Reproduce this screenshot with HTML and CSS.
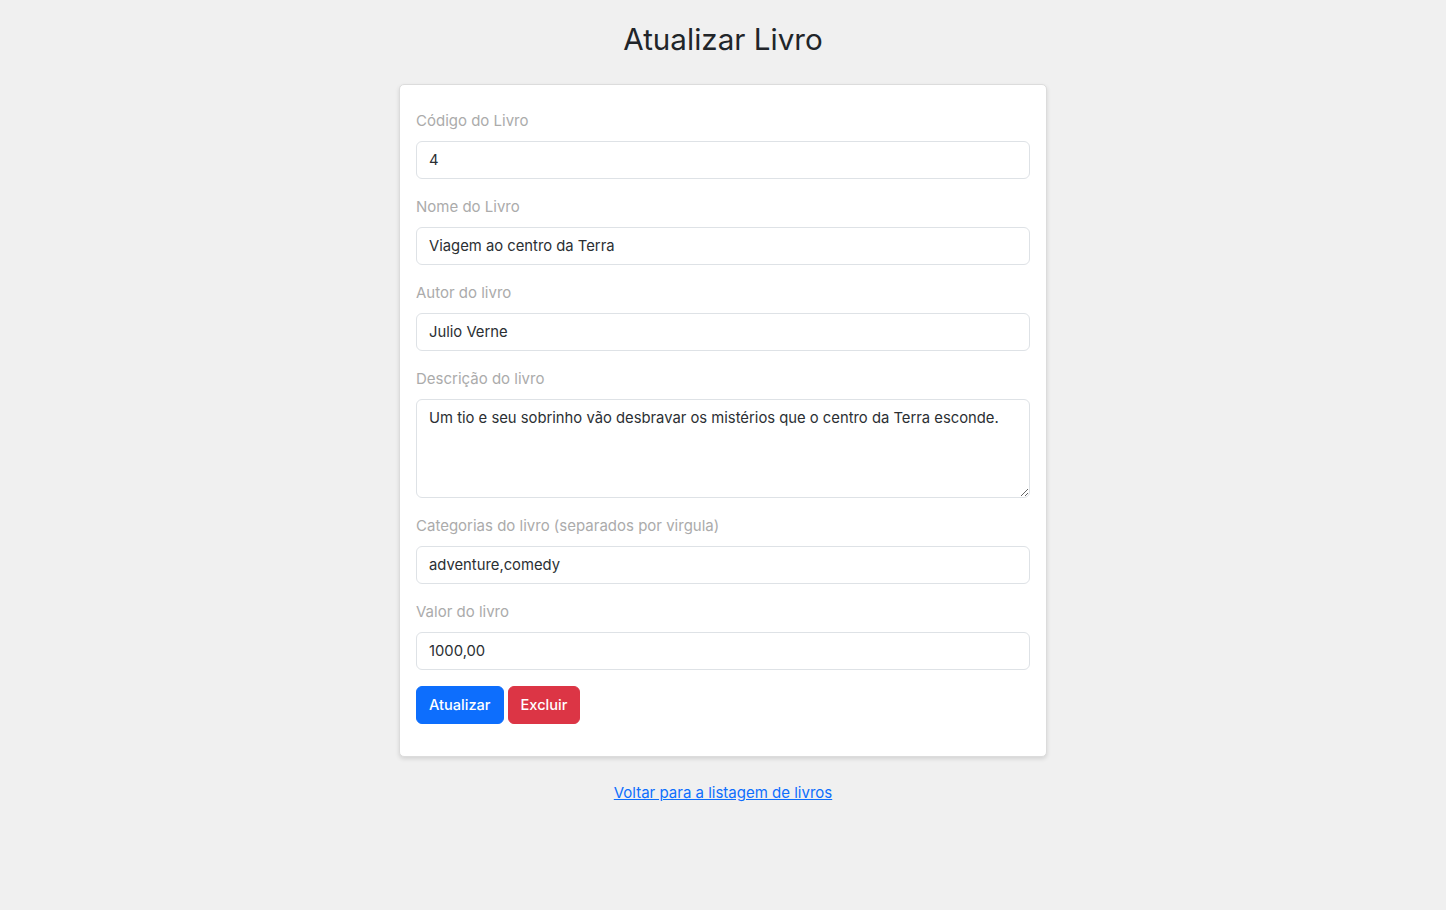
FILE: index.html
```html
<!DOCTYPE html>
<html lang="pt-BR">
<head>
<meta charset="utf-8">
<title>Atualizar Livro</title>
<link rel="stylesheet" href="styles.css">
</head>
<body>
<main class="page">
  <h1 class="title">Atualizar Livro</h1>
  <form class="card">
    <div class="field">
      <label class="label">Código do Livro</label>
      <input class="control" type="text" value="4">
    </div>
    <div class="field">
      <label class="label">Nome do Livro</label>
      <input class="control" type="text" value="Viagem ao centro da Terra">
    </div>
    <div class="field">
      <label class="label">Autor do livro</label>
      <input class="control" type="text" value="Julio Verne">
    </div>
    <div class="field">
      <label class="label">Descrição do livro</label>
      <textarea class="control area">Um tio e seu sobrinho vão desbravar os mistérios que o centro da Terra esconde.</textarea>
    </div>
    <div class="field">
      <label class="label">Categorias do livro (separados por virgula)</label>
      <input class="control" type="text" value="adventure,comedy">
    </div>
    <div class="field">
      <label class="label">Valor do livro</label>
      <input class="control" type="text" value="1000,00">
    </div>
    <div class="actions">
      <button type="button" class="btn btn-primary">Atualizar</button>
      <button type="button" class="btn btn-danger">Excluir</button>
    </div>
  </form>
  <a class="back" href="#">Voltar para a listagem de livros</a>
</main>
</body>
</html>
```
FILE: styles.css
```css
* { box-sizing: border-box; }
html, body { margin: 0; padding: 0; }
body {
  background: #f0f0f0;
  font-family: Inter, "Noto Sans", sans-serif;
  color: #212529;
  font-size: 16px;
  line-height: 24px;
}
.page {
  display: flex;
  flex-direction: column;
  align-items: center;
  padding-top: 19px;
}
.title {
  margin: 0 0 25px;
  font-size: 29.6px;
  line-height: 40px;
  font-weight: 400;
  color: #212529;
}
.card {
  width: 648px;
  background: #fff;
  border: 1px solid #dcdcdc;
  border-radius: 5px;
  box-shadow: 0 2px 4px rgba(0,0,0,0.12);
  padding: 24px 16px 32px;
  display: flex;
  flex-direction: column;
  gap: 16px;
}
.field {
  display: flex;
  flex-direction: column;
}
.label {
  color: #ababab;
  font-size: 15px;
  line-height: 24px;
  margin-bottom: 8px;
}
.control {
  display: block;
  width: 100%;
  height: 38px;
  padding: 6px 12px;
  font: inherit;
  font-size: 14.8px;
  color: #2b2f33;
  background: #fff;
  border: 1px solid #dee2e6;
  border-radius: 6px;
  outline: none;
}
.area {
  height: 99px;
  resize: vertical;
  line-height: 24px;
}
.actions {
  display: flex;
  gap: 4px;
}
.btn {
  height: 38px;
  padding: 6px 12px;
  font: inherit;
  font-size: 14.6px;
  font-weight: 500;
  color: #fff;
  border: 1px solid transparent;
  border-radius: 6px;
  cursor: pointer;
}
.btn-primary { background: #0d6efd; border-color: #0d6efd; }
.btn-danger { background: #dc3545; border-color: #dc3545; }
.back {
  margin-top: 24px;
  color: #0d6efd;
  font-size: 15px;
  line-height: 24px;
  text-decoration: underline;
}
```
